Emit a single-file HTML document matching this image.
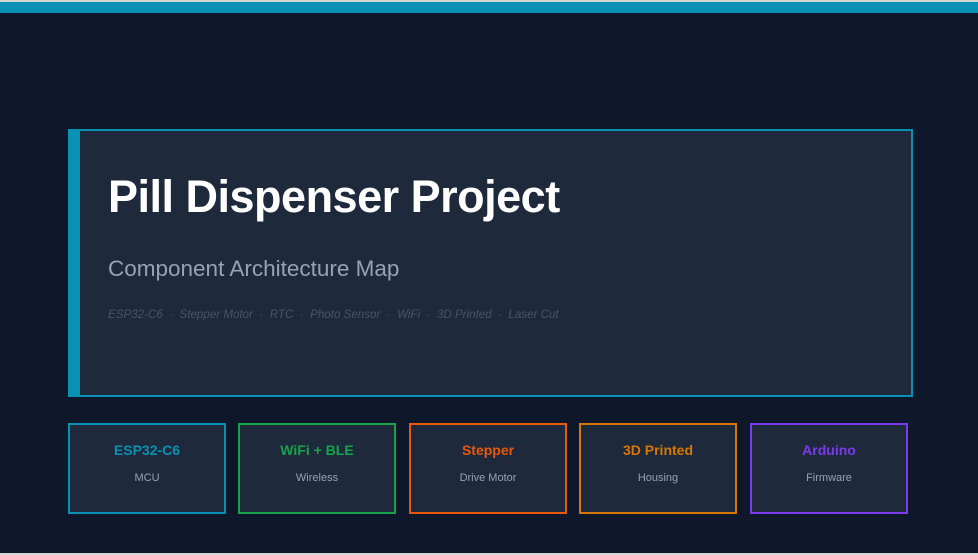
<!DOCTYPE html>
<html><head><meta charset="utf-8"><style>
*{margin:0;padding:0;box-sizing:border-box}
body{width:978px;height:555px;background:#0f172a;font-family:"Liberation Sans",sans-serif;position:relative;overflow:hidden}
.top0{position:absolute;left:0;top:0;width:978px;height:2px;background:#d4d4d4}
.top{position:absolute;left:0;top:2px;width:978px;height:11px;background:#0891b2}
.bot{position:absolute;left:0;top:553px;width:978px;height:2px;background:#d4d4d4}
.hero{position:absolute;left:68px;top:129px;width:845px;height:268px;background:#1e293b;border:2px solid #0891b2;border-left:12px solid #0891b2}
h1{position:absolute;left:28px;top:40px;font-size:45px;font-weight:bold;color:#fff;letter-spacing:-0.5px;white-space:nowrap}
.sub{position:absolute;left:28px;top:125px;font-size:22.5px;color:#94a3b8;white-space:nowrap}
.tags{position:absolute;left:28px;top:177px;font-size:11.6px;font-style:italic;color:#475569;white-space:pre}
.card{position:absolute;top:423px;width:158px;height:91px;background:#1e293b;border:2px solid;text-align:center}
.card b{display:block;margin-top:17px;font-size:14px}
.card span{display:block;margin-top:14px;font-size:11px;color:#94a3b8}
</style></head><body>
<div class="top0"></div><div class="top"></div>
<div class="hero">
<h1>Pill Dispenser Project</h1>
<div class="sub">Component Architecture Map</div>
<div class="tags">ESP32-C6  ·  Stepper Motor  ·  RTC  ·  Photo Sensor  ·  WiFi  ·  3D Printed  ·  Laser Cut</div>
</div>
<div class="card" style="left:68px;border-color:#0891b2"><b style="color:#0891b2">ESP32-C6</b><span>MCU</span></div>
<div class="card" style="left:238px;border-color:#16a34a"><b style="color:#16a34a">WiFi + BLE</b><span>Wireless</span></div>
<div class="card" style="left:409px;border-color:#ea580c"><b style="color:#ea580c">Stepper</b><span>Drive Motor</span></div>
<div class="card" style="left:579px;border-color:#d97706"><b style="color:#d97706">3D Printed</b><span>Housing</span></div>
<div class="card" style="left:750px;border-color:#7c3aed"><b style="color:#7c3aed">Arduino</b><span>Firmware</span></div>
<div class="bot"></div>
</body></html>
